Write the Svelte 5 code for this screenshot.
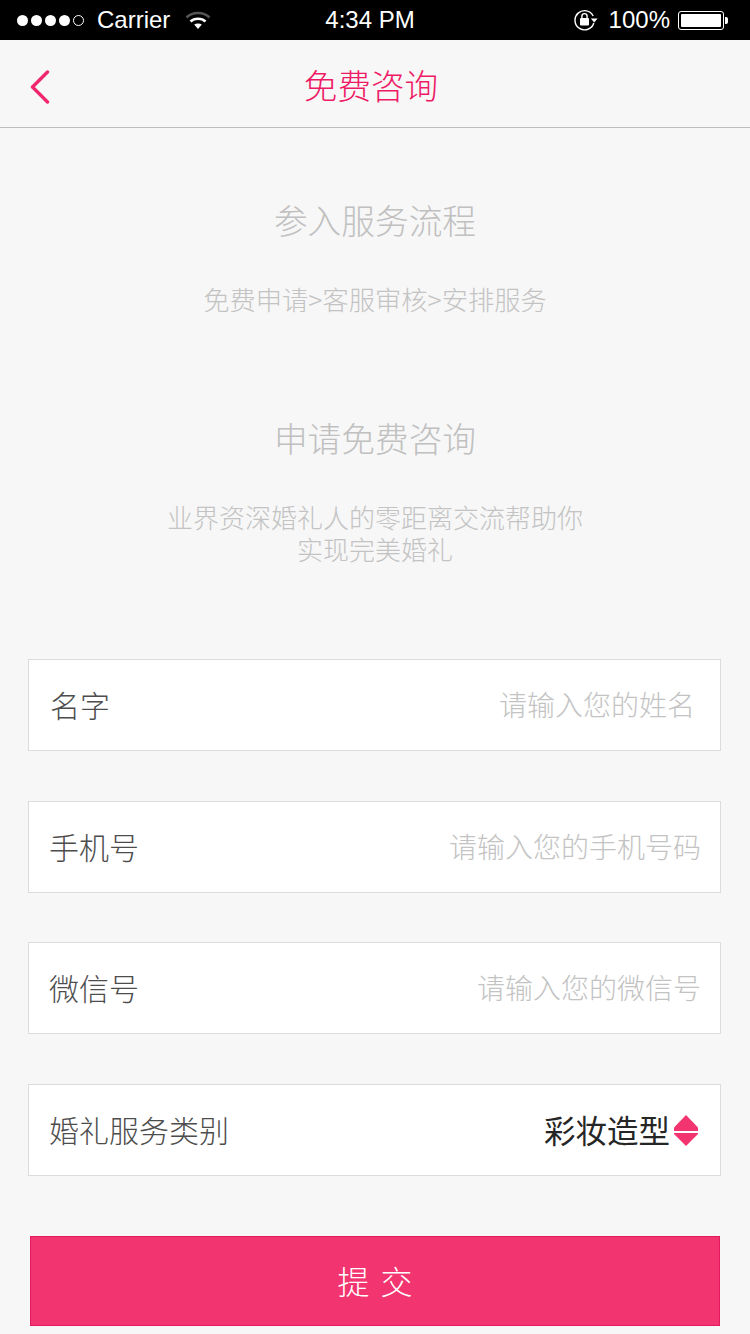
<script>
  const fields = [
    { label: '名字', hint: '请输入您的姓名', cls: 'first' },
    { label: '手机号', hint: '请输入您的手机号码', cls: 'second' },
    { label: '微信号', hint: '请输入您的微信号', cls: 'third' }
  ];
</script>

<div class="page">
  <div class="status">
    <div class="st-left">
      <span class="dots"><i></i><i></i><i></i><i></i><i class="empty"></i></span>
      <span class="carrier">Carrier</span>
      <svg class="wifi" width="26" height="20" viewBox="0 0 26 20">
        <path d="M1.5 7.5C7.5 1.5 18.5 1.5 24.5 7.5" fill="none" stroke="#555" stroke-width="2.6"/>
        <path d="M5.5 11.5C9.5 7.8 16.5 7.8 20.5 11.5" fill="none" stroke="#fff" stroke-width="2.6"/>
        <path d="M9.2 14.6C11.4 13 14.6 13 16.8 14.6L13 19Z" fill="#fff"/>
      </svg>
    </div>
    <span class="time">4:34 PM</span>
    <div class="st-right">
      <svg class="lock" width="24" height="22" viewBox="0 0 24 22">
        <path d="M19.8 14A9.6 9.6 0 1 1 19.2 7" fill="none" stroke="#fff" stroke-width="1.4"/>
        <path d="M16.8 9.6H23.6L20.2 13.6Z" fill="#fff"/>
        <rect x="6" y="9" width="9" height="7.5" rx="1" fill="#fff"/>
        <path d="M7.9 9V7.2a2.6 2.6 0 0 1 5.2 0V9" fill="none" stroke="#fff" stroke-width="1.4"/>
      </svg>
      <span class="pct">100%</span>
      <span class="battery"><span class="fill"></span></span>
      <span class="nub"></span>
    </div>
  </div>

  <header class="nav">
    <svg class="back" width="20" height="34" viewBox="0 0 20 34">
      <path d="M17.5 2 2.5 17 17.5 32" fill="none" stroke="#f0266f" stroke-width="3.4" stroke-linecap="round" stroke-linejoin="round"/>
    </svg>
    <h1>免费咨询</h1>
  </header>

  <section class="intro one">
    <h2>参入服务流程</h2>
    <p>免费申请&gt;客服审核&gt;安排服务</p>
  </section>

  <section class="intro two">
    <h2>申请免费咨询</h2>
    <p>业界资深婚礼人的零距离交流帮助你<br />实现完美婚礼</p>
  </section>

  <form class="form">
    {#each fields as f}
      <div class="field {f.cls}">
        <span class="label">{f.label}</span>
        <span class="hint">{f.hint}</span>
      </div>
    {/each}
    <div class="field fourth">
      <span class="label">婚礼服务类别</span>
      <span class="select">
        <span class="value">彩妆造型</span>
        <svg width="24" height="31" viewBox="0 0 24 31">
          <path d="M12 0 24 12.5V16H0V12.5Z" fill="#f23470"/>
          <path d="M0 18H24V19L12 31 0 19Z" fill="#f23470"/>
        </svg>
      </span>
    </div>
    <button type="button" class="submit">提 交</button>
  </form>
</div>

<style>
  :global(body) {
    margin: 0;
    background: #f7f7f7;
  }
  .page {
    width: 750px;
    height: 1334px;
    overflow: hidden;
    background: #f7f7f7;
    font-family: "Noto Sans CJK SC", "Noto Sans", sans-serif;
  }
  .status {
    height: 40px;
    background: #000;
    color: #fff;
    display: grid;
    grid-template-columns: 1fr auto 1fr;
    align-items: center;
    font-family: "Liberation Sans", Arial, sans-serif;
    font-size: 24px;
    line-height: 40px;
  }
  .st-left {
    display: flex;
    align-items: center;
    padding-left: 17px;
  }
  .dots {
    display: flex;
    gap: 3px;
  }
  .dots i {
    width: 11px;
    height: 11px;
    border-radius: 50%;
    background: #fff;
    box-sizing: border-box;
  }
  .dots i.empty {
    background: none;
    border: 1px solid #fff;
  }
  .carrier {
    margin-left: 13px;
  }
  .wifi {
    margin-left: 15px;
  }
  .time {
    font-size: 24px;
    position: relative;
    left: -5px;
  }
  .st-right {
    display: flex;
    align-items: center;
    justify-content: flex-end;
    padding-right: 22px;
  }
  .lock {
    margin-right: 11px;
  }
  .pct {
    margin-right: 8px;
  }
  .battery {
    width: 46px;
    height: 19px;
    border: 1px solid #fff;
    border-radius: 3px;
    box-sizing: border-box;
    padding: 2px;
    display: flex;
  }
  .fill {
    flex: 1;
    background: #fff;
    border-radius: 1px;
  }
  .nub {
    width: 3px;
    height: 7px;
    background: #fff;
    border-radius: 0 2px 2px 0;
    margin-left: 1px;
  }
  .nav {
    height: 87px;
    border-bottom: 1px solid #bdbdbd;
    position: relative;
    display: flex;
    align-items: center;
    justify-content: center;
  }
  .back {
    position: absolute;
    left: 30px;
    top: 30px;
  }
  .nav h1 {
    margin: 3px 0 0 -8px;
    font-size: 33.6px;
    font-weight: 300;
    line-height: 48px;
    color: #ee1a66;
  }
  .intro {
    text-align: center;
    color: #c3c3c3;
  }
  .intro.one {
    padding-top: 67px;
  }
  .intro.two {
    padding-top: 98px;
  }
  .intro h2 {
    margin: 0;
    font-size: 33.7px;
    font-weight: 300;
    line-height: 50px;
    color: #c0c0c0;
  }
  .intro p {
    margin: 38px 0 0;
    font-size: 26px;
    font-weight: 300;
    line-height: 32px;
  }
  .one p {
    font-size: 26.3px;
  }
  .form {
    margin: 94px 29px 0 28px;
    display: flex;
    flex-direction: column;
  }
  .field {
    height: 92px;
    box-sizing: border-box;
    background: #fff;
    border: 1px solid #dcdcdc;
    display: flex;
    align-items: center;
    justify-content: space-between;
    padding: 0 19px 2px 20px;
  }
  .first {
    padding: 0 25px 2px 21px;
  }
  .second {
    margin-top: 50px;
  }
  .third {
    margin-top: 49px;
  }
  .fourth {
    margin-top: 50px;
    padding-right: 22px;
    padding-bottom: 0;
  }
  .fourth .value {
    position: relative;
    top: -1px;
  }
  .label {
    font-size: 30px;
    font-weight: 300;
    color: #4d4d4d;
  }
  .fourth .label {
    position: relative;
    top: -1px;
  }
  .hint {
    font-size: 28px;
    font-weight: 300;
    color: #c3c3c3;
  }
  .select {
    display: flex;
    align-items: center;
    gap: 4px;
  }
  .value {
    font-size: 31.5px;
    font-weight: 400;
    color: #262626;
  }
  .submit {
    margin: 60px 0 0 2px;
    width: 690px;
    height: 90px;
    box-sizing: border-box;
    background: #f23470;
    border: 1px solid #e41a60;
    color: #fff;
    font-family: inherit;
    font-size: 32px;
    font-weight: 300;
    word-spacing: 4px;
    padding: 0 0 3px;
  }
</style>
